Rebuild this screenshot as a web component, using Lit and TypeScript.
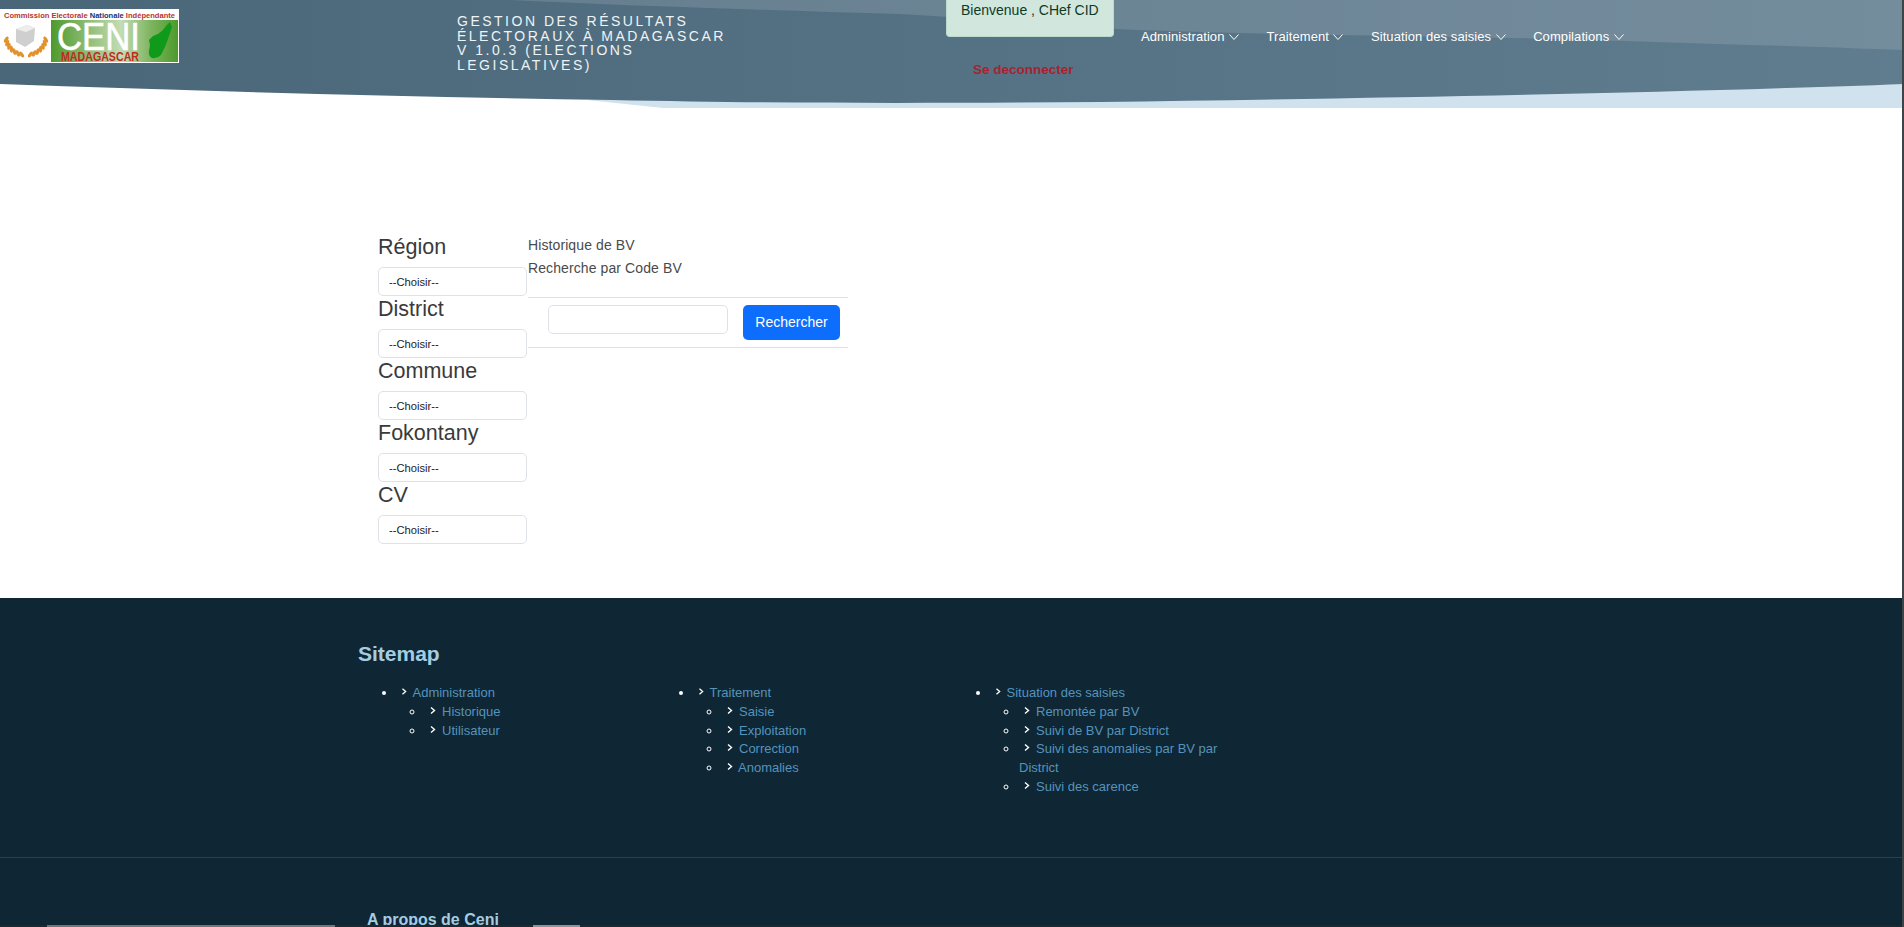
import { LitElement, css, html, svg } from 'lit'
import { customElement } from 'lit/decorators.js'

type Link = { label: string, tight?: boolean }
type SitemapCol = { title: string, links: Link[] }

const navItems = ['Administration', 'Traitement', 'Situation des saisies', 'Compilations']
const zones = ['Région', 'District', 'Commune', 'Fokontany', 'CV']

const sitemap: SitemapCol[] = [
   { title: 'Administration', links: [{ label: 'Historique' }, { label: 'Utilisateur' }] },
   {
      title: 'Traitement',
      links: [{ label: 'Saisie' }, { label: 'Exploitation' }, { label: 'Correction' }, { label: 'Anomalies', tight: true }]
   },
   {
      title: 'Situation des saisies',
      links: [
         { label: 'Remontée par BV' },
         { label: 'Suivi de BV par District' },
         { label: 'Suivi des anomalies par BV par District' },
         { label: 'Suivi des carence' }
      ]
   }
]

const chevronDown = html`<svg class="down" viewBox="0 0 12 12"><path d="M1.5 3.5 6 8.5l4.5-5" fill="none" stroke="currentColor" stroke-width="1"/></svg>`
const chevronRight = html`<svg class="right" viewBox="0 0 17 14"><path d="M6 3.5 9.5 6.5 6 9.5" fill="none" stroke="#fff" stroke-width="1.4"/></svg>`

const waves = svg`<svg class="waves" viewBox="0 0 1904 108" preserveAspectRatio="none">
   <defs>
      <linearGradient id="wave" x1="0" x2="1" y1="0" y2="0">
         <stop offset="0" stop-color="#4a6779"/>
         <stop offset="1" stop-color="#607c8f"/>
      </linearGradient>
   </defs>
   <rect width="1904" height="108" fill="#fff"/>
   <path d="M587 100 663 108H1904V80H1000Z" fill="#d0e2ed"/>
   <path d="M0 84C200 91 400 97 612 100C800 104 950 103 1100 102C1400 98 1700 92 1904 84V0H0Z" fill="url(#wave)"/>
   <path d="M510 0C640 6 760 10 900 14C1000 20 1060 26 1137 30C1300 36 1500 36 1624 41C1720 44 1820 47 1904 50V0Z" fill="#fff" fill-opacity=".13"/>
</svg>`

// laurel leaves along an arc, mirrored around the ballot box
const leaves = [0, 1, 2, 3, 4, 5, 6].flatMap(i => {
   const a = 0.15 + i * 0.2
   const dx = Math.cos(a) * 20
   const y = 28 + Math.sin(a) * 18
   const rot = 90 - a * 57
   return [
      svg`<ellipse cx=${26 - dx} cy=${y} rx="3.4" ry="1.7" fill="#e2922c" transform="rotate(${rot - 140} ${26 - dx} ${y})"/>`,
      svg`<ellipse cx=${26 + dx} cy=${y} rx="3.4" ry="1.7" fill="#e2922c" transform="rotate(${140 - rot} ${26 + dx} ${y})"/>`
   ]
})

const logo = svg`<svg class="logo" viewBox="0 0 179 54">
   <defs>
      <linearGradient id="green" x1="0" x2="1" y1="0" y2="0">
         <stop offset="0" stop-color="#4d9a2c"/>
         <stop offset=".28" stop-color="#8dbb72"/>
         <stop offset=".55" stop-color="#c3dcb4"/>
         <stop offset=".78" stop-color="#7fb561"/>
         <stop offset="1" stop-color="#4d9a2c"/>
      </linearGradient>
   </defs>
   <rect width="179" height="54" fill="#fff"/>
   <text x="4" y="8.5" font-size="7.5" font-weight="700" fill="#b5352c" textLength="171" lengthAdjust="spacingAndGlyphs">Commission Electorale <tspan fill="#22306e">Nationale</tspan> Indépendante</text>
   <rect x="51" y="11" width="127" height="42" fill="url(#green)"/>
   <text x="57" y="41" font-size="38" fill="#fff" stroke="#fff" stroke-width=".6" textLength="83" lengthAdjust="spacingAndGlyphs">CENI</text>
   <text x="61" y="52" font-size="12" font-weight="700" fill="#c22a20" textLength="78" lengthAdjust="spacingAndGlyphs">MADAGASCAR</text>
   <path d="M170 13 172 18 170 24 168 30 165 38 161 46Q157 50 152 49 148 47 149 42L150 36 149 31 153 27 158 25 163 21 166 17Z" fill="#109a1c"/>
   ${leaves}
   <path d="M16 20 27 16 35 19 34 32 25 38 16 33Z" fill="#cfcfcf"/>
   <path d="M16 20 26 23 35 19 27 16Z" fill="#ededed"/>
</svg>`

@customElement('app-root')
export class AppRoot extends LitElement {

   render() {
      return html`
         <header>
            ${waves}
            <div class="logo-col">${logo}</div>
            <div class="title">Gestion des résultats électoraux à Madagascar V 1.0.3 (Elections Legislatives)</div>
            <div class="user">
               <div class="welcome">Bienvenue , CHef CID</div>
               <a class="logout">Se deconnecter</a>
            </div>
            <nav>
               ${navItems.map(item => html`<a>${item}${chevronDown}</a>`)}
            </nav>
         </header>

         <main>
            <section class="zones">
               ${zones.map(zone => html`
                  <h4>${zone}</h4>
                  <select><option>--Choisir--</option></select>
               `)}
            </section>
            <section class="search">
               <p>Historique de BV</p>
               <p>Recherche par Code BV</p>
               <form>
                  <input type="text" />
                  <button type="button">Rechercher</button>
               </form>
            </section>
         </main>

         <footer>
            <h3>Sitemap</h3>
            <div class="cols">
               ${sitemap.map(col => html`
                  <ul>
                     <li>
                        <span class="top">${chevronRight}<a>${col.title}</a></span>
                        <ul>
                           ${col.links.map(link => html`<li class=${link.tight ? 'tight' : ''}>${chevronRight}<a>${link.label}</a></li>`)}
                        </ul>
                     </li>
                  </ul>
               `)}
            </div>
            <hr />
            <h5>A propos de Ceni</h5>
            <div class="strip"><span class="a"></span><span class="b"></span></div>
         </footer>
      `
   }

   static styles = css`
      :host {
         display: block;
         position: relative;
         height: 927px;
         overflow: hidden;
         font-family: "Liberation Sans", Arial, sans-serif;
         font-size: 14px;
         color: #444;
         background: #fff;
      }

      /* thin dark edge down the right of the page */
      :host::after {
         content: "";
         position: absolute;
         top: 0;
         right: 0;
         bottom: 0;
         width: 2px;
         background: #3d4347;
      }

      /* header */
      header {
         position: relative;
         display: flex;
         height: 108px;
      }

      .waves {
         position: absolute;
         inset: 0;
         width: 100%;
         height: 100%;
      }

      .logo-col, .title, .user, nav {
         position: relative;
      }

      .logo-col {
         width: 457px;
         padding-top: 9px;
      }

      .logo {
         display: block;
         width: 179px;
         height: 54px;
         font-family: "Liberation Sans", sans-serif;
      }

      .title {
         width: 280px;
         margin-top: 14px;
         margin-right: 209px;
         color: #eef3f6;
         line-height: 14.5px;
         letter-spacing: 2.5px;
         text-transform: uppercase;
      }

      .user {
         width: 195px;
      }

      .welcome {
         box-sizing: border-box;
         width: 168px;
         height: 37px;
         padding-left: 14px;
         background: #d1e7dd;
         border: 1px solid #badbcc;
         border-top: none;
         border-radius: 0 0 4px 4px;
         color: #0f3a26;
         line-height: 20px;
      }

      .logout {
         display: block;
         margin: 25px 0 0 27px;
         color: #a8232f;
         font-size: 13.5px;
         font-weight: 700;
         line-height: 16px;
      }

      nav {
         display: flex;
         gap: 26.5px;
         margin-top: 29px;
         color: #fff;
         font-size: 13px;
         letter-spacing: .08px;
         line-height: 16px;
      }

      nav a {
         display: flex;
         gap: 3.5px;
         align-items: center;
         height: 16px;
      }

      .down {
         width: 12px;
         height: 12px;
      }

      /* main */
      main {
         display: flex;
         height: 490px;
         padding: 126px 0 0 378px;
         box-sizing: border-box;
      }

      .zones {
         width: 149px;
         margin-right: 1px;
      }

      h4 {
         margin: 0;
         height: 33px;
         font-size: 21.5px;
         font-weight: 400;
         line-height: 26px;
         color: #3a3a3a;
      }

      select {
         display: block;
         box-sizing: border-box;
         width: 149px;
         height: 29px;
         padding: 0 0 0 10px;
         appearance: none;
         background: #fff;
         border: 1px solid #dee2e6;
         border-radius: 5px;
         color: #222;
         font: 11.2px "Liberation Sans", sans-serif;
      }

      .search {
         width: 320px;
      }

      .search p {
         margin: 0;
         height: 23px;
         line-height: 23px;
         font-size: 14px;
         letter-spacing: .1px;
         color: #4a4a4a;
      }

      form {
         display: flex;
         align-items: flex-start;
         gap: 15px;
         box-sizing: border-box;
         height: 51px;
         margin-top: 17px;
         padding: 7px 0 0 20px;
         border-top: 1px solid #dee2e6;
         border-bottom: 1px solid #dee2e6;
      }

      input {
         box-sizing: border-box;
         width: 180px;
         height: 29px;
         background: #fff;
         border: 1px solid #dee2e6;
         border-radius: 5px;
      }

      button {
         box-sizing: border-box;
         width: 97px;
         height: 35px;
         padding: 0 0 1px;
         background: #0d6efd;
         border: none;
         border-radius: 5px;
         color: #fff;
         font: 14px "Liberation Sans", sans-serif;
      }

      /* footer */
      footer {
         position: relative;
         height: 329px;
         background: #0f2635;
         color: #fff;
         overflow: hidden;
      }

      h3 {
         margin: 0;
         padding: 43px 0 0 358px;
         font-size: 21px;
         line-height: 25px;
         color: #a5cde0;
      }

      .cols {
         display: grid;
         grid-template-columns: repeat(3, 297px);
         padding: 18px 0 0 369px;
         height: 173px;
      }

      .cols ul {
         margin: 0;
         padding: 0 0 0 28px;
         font-size: 13px;
         line-height: 18.8px;
      }

      .cols > ul {
         width: 230px;
      }

      .cols a {
         color: #5594ba;
      }

      .right {
         display: inline-block;
         width: 17px;
         height: 14px;
         vertical-align: -2px;
      }

      .top .right {
         width: 15.5px;
      }

      .tight .right {
         margin-right: -1px;
      }

      hr {
         margin: 0;
         height: 1px;
         border: none;
         background: #1f4454;
      }

      h5 {
         margin: 0;
         padding: 53px 0 0 367px;
         font-size: 16px;
         line-height: 18px;
         color: #a5cde0;
      }

      .strip {
         position: absolute;
         left: 0;
         right: 0;
         bottom: 0;
         height: 2px;
         background: #1a2a33;
      }

      .strip span {
         position: absolute;
         top: 0;
         height: 2px;
      }

      .strip .a {
         left: 47px;
         width: 288px;
         background: #6d777c;
      }

      .strip .b {
         left: 533px;
         width: 47px;
         background: #8b9499;
      }
   `
}

declare global {
   interface HTMLElementTagNameMap {
      'app-root': AppRoot
   }
}
